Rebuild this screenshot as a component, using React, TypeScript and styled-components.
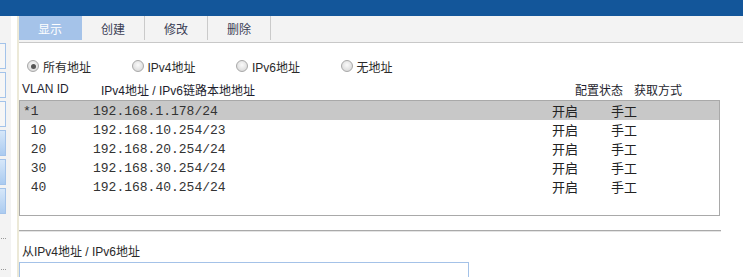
import React from "react";
import styled, { createGlobalStyle } from "styled-components";

const Global = createGlobalStyle`
  html, body { margin: 0; padding: 0; background: #fff; }
  body { width: 743px; height: 277px; overflow: hidden; font-family: "Liberation Sans", "Noto Sans CJK SC", sans-serif; font-size: 12px; color: #222; }
`;

const Page = styled.div`
  display: flex;
  flex-direction: column;
  width: 743px;
  height: 277px;
  overflow: hidden;
`;

const TopBar = styled.div`
  height: 16px;
  background: #13569a;
  flex: none;
`;

const Body = styled.div`
  display: flex;
  flex: 1;
  min-height: 0;
`;

const SidePanel = styled.div`
  width: 11px;
  flex: none;
  background: #f3f3f3;
  display: flex;
  flex-direction: column;
  padding-top: 27px;
  gap: 3px;
  box-sizing: border-box;
`;

const SideBox = styled.div<{ $filled?: boolean }>`
  width: 6px;
  height: 26px;
  box-sizing: border-box;
  border: 1px solid #a3c3ea;
  border-left: none;
  background: ${(p) => (p.$filled ? "linear-gradient(#d6e7f9, #abcbf0)" : "#f6f6f6")};
`;

const SideDots = styled.div<{ $top: number }>`
  margin-top: ${(p) => p.$top}px;
  width: 8px;
  height: 2px;
  padding-left: 1px;
  display: flex;
  gap: 1px;
  span { width: 1px; height: 1px; background: #999; }
`;

const Gutter = styled.div`
  width: 6px;
  flex: none;
  background: #fff;
`;

const Divider = styled.div`
  width: 2px;
  flex: none;
  background: #ece9d8;
`;

const Main = styled.div`
  flex: 1;
  display: flex;
  flex-direction: column;
  min-width: 0;
`;

const TabBar = styled.div`
  height: 26px;
  background: #f3f3f3;
  border-bottom: 1px solid #c8c8c8;
  display: flex;
  align-items: flex-start;
  flex: none;
`;

const Tab = styled.div<{ $active?: boolean }>`
  width: 62px;
  height: 24px;
  border-right: 1px solid ${(p) => (p.$active ? "transparent" : "#cacaca")};
  background: ${(p) => (p.$active ? "#a5c3e9" : "transparent")};
  color: ${(p) => (p.$active ? "#fff" : "#3a3d55")};
  display: flex;
  align-items: center;
  justify-content: center;
  font-size: 12px;
`;

const RadioRow = styled.div`
  display: flex;
  height: 16px;
  margin-top: 15px;
  padding-left: 8px;
  align-items: center;
`;

const RadioItem = styled.label`
  display: flex;
  align-items: center;
  gap: 4px;
  width: 104.5px;
  color: #2a2a2a;
`;

const RadioCircle = styled.span<{ $checked?: boolean }>`
  width: 12px;
  height: 12px;
  box-sizing: border-box;
  border-radius: 50%;
  border: 1px solid #a8a8a8;
  background: radial-gradient(circle at 50% 40%, #fafafa 0%, #e2e2e2 60%, #cfcfcf 100%);
  display: flex;
  align-items: center;
  justify-content: center;
  &::after {
    content: "";
    width: 5px;
    height: 5px;
    border-radius: 50%;
    background: ${(p) => (p.$checked ? "#555" : "transparent")};
  }
`;

const HeaderRow = styled.div`
  display: flex;
  height: 16px;
  margin-top: 7px;
  align-items: center;
  padding-left: 3px;
  color: #1e1e2e;
`;

const HeadCell = styled.div<{ $w?: number }>`
  width: ${(p) => (p.$w ? `${p.$w}px` : "auto")};
  flex: ${(p) => (p.$w ? "none" : "1")};
  white-space: nowrap;
`;

const ListBox = styled.div`
  margin-top: 3px;
  width: 701px;
  height: 116px;
  box-sizing: border-box;
  border: 1px solid #a9a9a9;
  display: flex;
  flex-direction: column;
  flex: none;
`;

const Row = styled.div<{ $selected?: boolean }>`
  height: 19px;
  display: flex;
  align-items: center;
  padding-left: 3px;
  background: ${(p) => (p.$selected ? "#c8c8c8" : "transparent")};
  color: #333;
`;

const Mono = styled.div<{ $w?: number }>`
  font-family: "Liberation Mono", "DejaVu Sans Mono", monospace;
  font-size: 13px;
  white-space: pre;
  width: ${(p) => (p.$w ? `${p.$w}px` : "auto")};
  flex: none;
  padding-top: 1px;
`;

const TextCell = styled.div<{ $w: number }>`
  width: ${(p) => p.$w}px;
  flex: none;
  font-size: 13px;
  color: #222;
`;

const Rule = styled.div`
  margin-top: 14px;
  width: 702px;
  height: 1px;
  background: #a9a9a9;
  border-bottom: 1px solid #e4e4e4;
  flex: none;
`;

const FieldLabel = styled.div`
  margin-top: 12px;
  height: 16px;
  line-height: 16px;
  padding-left: 3px;
  color: #2a2a2a;
`;

const Input = styled.div`
  margin-top: 2px;
  width: 450px;
  height: 30px;
  box-sizing: border-box;
  border: 1px solid #a4c2e8;
  flex: none;
`;

const rows = [
  { vlan: "*1", ip: "192.168.1.178/24", selected: true },
  { vlan: " 10", ip: "192.168.10.254/23" },
  { vlan: " 20", ip: "192.168.20.254/24" },
  { vlan: " 30", ip: "192.168.30.254/24" },
  { vlan: " 40", ip: "192.168.40.254/24" },
];

export default function App() {
  return (
    <Page>
      <Global />
      <TopBar />
      <Body>
        <SidePanel>
          <SideBox />
          <SideBox />
          <SideBox />
          <SideBox $filled />
          <SideBox $filled />
          <SideBox $filled />
          <SideDots $top={21}>
            <span />
            <span />
            <span />
          </SideDots>
          <SideDots $top={26}>
            <span />
            <span />
            <span />
          </SideDots>
        </SidePanel>
        <Gutter />
        <Divider />
        <Main>
          <TabBar>
            <Tab $active>显示</Tab>
            <Tab>创建</Tab>
            <Tab>修改</Tab>
            <Tab>删除</Tab>
          </TabBar>
          <RadioRow>
            <RadioItem>
              <RadioCircle $checked />
              所有地址
            </RadioItem>
            <RadioItem>
              <RadioCircle />
              IPv4地址
            </RadioItem>
            <RadioItem>
              <RadioCircle />
              IPv6地址
            </RadioItem>
            <RadioItem>
              <RadioCircle />
              无地址
            </RadioItem>
          </RadioRow>
          <HeaderRow>
            <HeadCell $w={79}>VLAN ID</HeadCell>
            <HeadCell $w={474}>IPv4地址 / IPv6链路本地地址</HeadCell>
            <HeadCell $w={59}>配置状态</HeadCell>
            <HeadCell>获取方式</HeadCell>
          </HeaderRow>
          <ListBox>
            {rows.map((r) => (
              <Row key={r.ip} $selected={r.selected}>
                <Mono $w={70}>{r.vlan}</Mono>
                <Mono $w={459}>{r.ip}</Mono>
                <TextCell $w={59}>开启</TextCell>
                <TextCell $w={40}>手工</TextCell>
              </Row>
            ))}
          </ListBox>
          <Rule />
          <FieldLabel>从IPv4地址 / IPv6地址</FieldLabel>
          <Input />
        </Main>
      </Body>
    </Page>
  );
}
